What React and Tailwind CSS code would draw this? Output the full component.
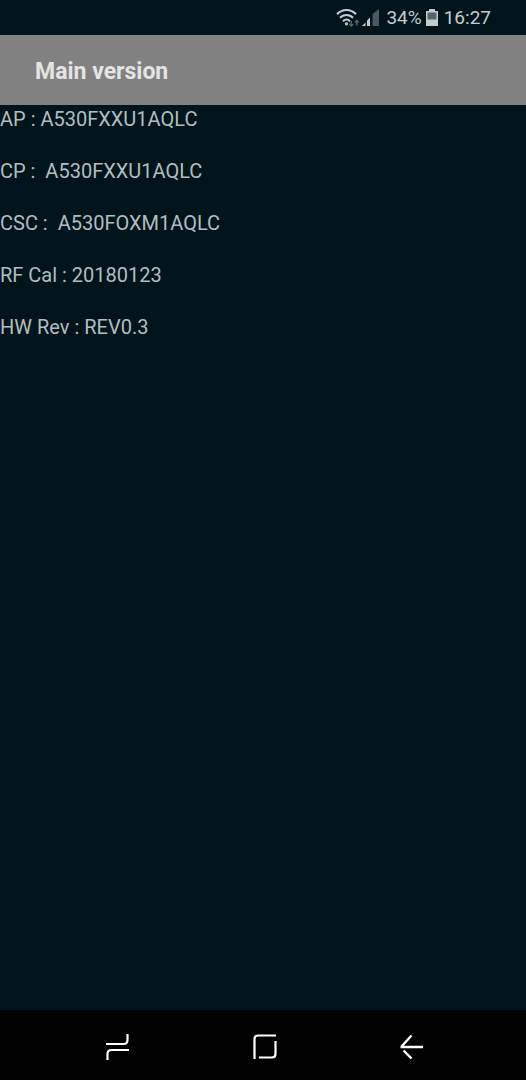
import React from "react";

const VERSIONS = [
  "AP : A530FXXU1AQLC",
  "CP :  A530FXXU1AQLC",
  "CSC :  A530FOXM1AQLC",
  "RF Cal : 20180123",
  "HW Rev : REV0.3",
];

// ═══════════════════ Status bar ═══════════════════

function WifiIcon() {
  return (
    <svg className="w-6 h-5" viewBox="0 0 24 20" fill="none" stroke="#c3cdd0" strokeWidth="2">
      <path d="M1 6.2C6.2 0.600 14.8 0.600 20 6.2" />
      <path d="M4 9.8C7.500 6 13.500 6 17 9.8" />
      <path d="M7 13.200C9.100 11 11.900 11 14 13.200" />
      <circle cx="10.5" cy="15.8" r="1.6" fill="#c3cdd0" stroke="none" />
      <path d="M15.3 13v5M13.3 16l2 2 2-2M20.800 17.500v-5M18.800 14.500l2-2 2 2" stroke="#566468" strokeWidth="1.4" />
    </svg>
  );
}

function SignalIcon() {
  return (
    <svg className="w-[18px] h-5" viewBox="0 0 18 20">
      <path d="M0 18l3.500-3.500V18z" fill="#c3cdd0" />
      <path d="M5 18v-5.500l3-3V18z" fill="#c3cdd0" />
      <path d="M10.500 18V6l6.500-5v17z" fill="#4b585c" />
    </svg>
  );
}

function BatteryIcon() {
  return (
    <svg className="w-3 h-5" viewBox="0 0 12 20">
      <path d="M3 1h6v2h3v15H0V3h3z" fill="#c3cdd0" />
      <path d="M1.500 4.500h9v7h-9z" fill="#566468" />
    </svg>
  );
}

function StatusBar() {
  return (
    <div className="flex h-[35px] items-center justify-end pr-[35px] text-[19px] leading-6 text-[#c3cdd0]">
      <WifiIcon />
      <div className="ml-0.5"><SignalIcon /></div>
      <span className="ml-1.5">34%</span>
      <div className="ml-1"><BatteryIcon /></div>
      <span className="ml-1.5">16:27</span>
    </div>
  );
}

// ═══════════════════ Navigation bar ═══════════════════

function NavBar() {
  const button = "flex h-full items-center justify-center";
  const icon = "w-6 h-7";
  return (
    <nav className="grid h-[70px] grid-cols-3 bg-black pt-1 pl-11 pr-10">
      <button className={button} aria-label="Recents">
        <svg className={icon} viewBox="0 0 24 28" fill="none" stroke="#fff" strokeWidth="2.2">
          <path d="M0 11h17.500q4 0 4-4V1" />
          <path d="M23 17H5.500q-4 0-4 4v6" />
        </svg>
      </button>
      <button className={button} aria-label="Home">
        <svg className={icon} viewBox="0 0 24 28" fill="none" stroke="#fff" strokeWidth="2.2">
          <path d="M1.500 26V6q0-3.500 3.500-3.500h18" />
          <path d="M22.500 8v13q0 3.500-3.500 3.500H6" />
        </svg>
      </button>
      <button className={button} aria-label="Back">
        <svg className={icon} viewBox="0 0 24 28" fill="none" stroke="#fff" strokeWidth="2.4">
          <path d="M11.500 2.500L1.500 13.500M0.500 14H23M3.500 17.500L11.500 25.500" />
        </svg>
      </button>
    </nav>
  );
}

export default function App() {
  return (
    <div className="flex min-h-screen flex-col bg-[#00141b] font-['Roboto',sans-serif]">
      <StatusBar />
      <header className="flex h-[70px] items-center bg-[#818181] px-[35px] pt-1">
        <h1 className="text-[23px] leading-7 font-bold text-[#e4e4e4]">Main version</h1>
      </header>
      <main className="flex flex-1 flex-col gap-[26px] pt-px text-[20px] leading-[26px] text-[#b3bdc0]">
        {VERSIONS.map((line) => (
          <p key={line} className="whitespace-pre">{line}</p>
        ))}
      </main>
      <NavBar />
    </div>
  );
}
